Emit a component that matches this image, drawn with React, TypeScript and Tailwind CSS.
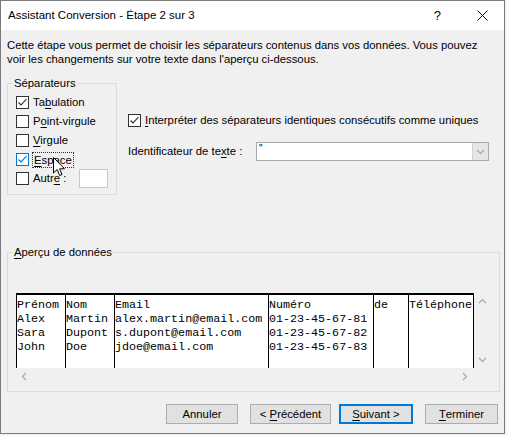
import type { ReactNode } from "react";

const ui = { fontFamily: '"Liberation Sans", Arial, sans-serif' };
const mono = { fontFamily: '"Liberation Mono", "Courier New", monospace' };

function Check({ blue }: { blue?: boolean }) {
  return (
    <svg width="11" height="11" viewBox="0 0 11 11" className="block">
      <path
        d="M1.5 5.5 L4 8 L9.5 2.2"
        fill="none"
        stroke={blue ? "#0078d7" : "#333333"}
        strokeWidth="1.1"
      />
    </svg>
  );
}

function Box({ checked, blue }: { checked?: boolean; blue?: boolean }) {
  return (
    <span
      className={
        "flex h-[13px] w-[13px] shrink-0 items-center justify-center border bg-white " +
        (blue ? "border-[#0078d7]" : "border-[#333333]")
      }
    >
      {checked && <Check blue={blue} />}
    </span>
  );
}

/** Label with one underlined mnemonic letter. */
function Mn({ pre = "", u, post = "" }: { pre?: string; u: string; post?: string }) {
  return (
    <>
      {pre}
      <span className="underline underline-offset-2">{u}</span>
      {post}
    </>
  );
}

function Chevron({ dir }: { dir: "up" | "down" | "left" | "right" }) {
  const d = {
    up: "M1 6 L4.5 2.5 L8 6",
    down: "M1 3 L4.5 6.5 L8 3",
    left: "M6 1 L2.5 4.5 L6 8",
    right: "M3 1 L6.5 4.5 L3 8",
  }[dir];
  return (
    <svg width="9" height="9" viewBox="0 0 9 9" className="block">
      <path d={d} fill="none" stroke="#a8a8a8" strokeWidth="1.2" />
    </svg>
  );
}

function Button({
  w,
  focused,
  children,
}: {
  w: string;
  focused?: boolean;
  children: ReactNode;
}) {
  return (
    <div
      className={
        "flex h-[20px] items-center justify-center bg-[#e1e1e1] text-black " +
        w +
        (focused ? " border-2 border-[#0078d7]" : " border border-[#adadad]")
      }
    >
      {children}
    </div>
  );
}

const columns: { w: string; rows: string[] }[] = [
  { w: "w-[49px]", rows: ["Prénom", "Alex", "Sara", "John"] },
  { w: "w-[49px]", rows: ["Nom", "Martin", "Dupont", "Doe"] },
  {
    w: "w-[154px]",
    rows: ["Email", "alex.martin@email.com", "s.dupont@email.com", "jdoe@email.com"],
  },
  {
    w: "w-[105px]",
    rows: ["Numéro", "01-23-45-67-81", "01-23-45-67-82", "01-23-45-67-83"],
  },
  { w: "w-[35px]", rows: ["de"] },
  { w: "w-[66px] border-r", rows: ["Téléphone"] },
];

export default function App() {
  return (
    <div className="h-[436px] w-[507px] bg-[#f4f4f4]" style={ui}>
      <div className="flex h-[434px] w-[505px] flex-col overflow-hidden border border-[#7a7a7a] bg-[#f0f0f0] text-[11.3px] whitespace-nowrap text-black">
        {/* title bar */}
        <div className="flex h-[29px] shrink-0 items-center bg-white pl-[7px] text-[11.5px]">
          <span>Assistant Conversion - Étape 2 sur 3</span>
          <span className="ml-auto mr-[36px] text-[13px]">?</span>
          <svg width="11" height="11" viewBox="0 0 11 11" className="mr-[16px]">
            <path d="M0.5 0.5 L10.5 10.5 M10.5 0.5 L0.5 10.5" stroke="#111" strokeWidth="1" />
          </svg>
        </div>

        <div className="flex flex-col px-[6px] pt-[8px]">
          <p className="leading-[14px]">
            Cette étape vous permet de choisir les séparateurs contenus dans vos données. Vous pouvez
            <br />
            voir les changements sur votre texte dans l'aperçu ci-dessous.
          </p>

          <div className="mt-[10px] flex">
            <fieldset className="w-[110px] border border-[#dcdcdc] pb-[6px] pl-[5px]">
              <legend className="px-[1px] leading-[14px]">Séparateurs</legend>
              <div className="flex flex-col pl-[3px] pt-[3px]">
                <label className="flex h-[19px] items-center gap-[4px]">
                  <Box checked />
                  <span>
                    <Mn pre="Ta" u="b" post="ulation" />
                  </span>
                </label>
                <label className="flex h-[19px] items-center gap-[4px]">
                  <Box />
                  <span>
                    <Mn pre="P" u="o" post="int-virgule" />
                  </span>
                </label>
                <label className="flex h-[19px] items-center gap-[4px]">
                  <Box />
                  <span>
                    <Mn u="V" post="irgule" />
                  </span>
                </label>
                <label className="relative flex h-[19px] items-center gap-[3px]">
                  <Box checked blue />
                  <span className="border border-dotted border-[#333] px-[1px] leading-[14px]">
                    <Mn u="E" post="space" />
                  </span>
                  <svg
                    width="13"
                    height="21"
                    viewBox="0 0 13 21"
                    className="absolute left-[37px] top-[7px]"
                  >
                    <path
                      d="M0.5 0.5 L0.5 16 L4.2 12.5 L6.7 18.5 L9 17.5 L6.6 11.8 L11.5 11.8 Z"
                      fill="white"
                      stroke="black"
                      strokeWidth="1"
                      strokeLinejoin="round"
                    />
                  </svg>
                </label>
                <label className="flex h-[19px] items-center gap-[4px]">
                  <Box />
                  <span>
                    <Mn pre="Autr" u="e" post=" :" />
                  </span>
                  <span className="ml-[9px] h-[19px] w-[29px] border border-[#c8c8c8] bg-white" />
                </label>
              </div>
            </fieldset>

            <div className="ml-[11px] flex flex-col pt-[36px]">
              <label className="flex h-[16px] items-center gap-[4px]">
                <Box checked />
                <span>
                  <Mn u="I" post="nterpréter des séparateurs identiques consécutifs comme uniques" />
                </span>
              </label>
              <div className="mt-[14px] flex h-[19px] items-center">
                <span className="w-[128px]">
                  <Mn pre="Identificateur de te" u="x" post="te :" />
                </span>
                <div className="flex h-[19px] w-[233px] items-stretch border border-[#a8a8a8] bg-white">
                  <span className="pl-[2px] text-[10px] leading-[12px]">"</span>
                  <span className="ml-auto flex w-[16px] items-center justify-center border-l border-[#cfcfcf] bg-[#e6e6e6]">
                    <Chevron dir="down" />
                  </span>
                </div>
              </div>
            </div>
          </div>

          <fieldset className="mt-[50px] w-[493px] border border-[#dcdcdc] pb-[6px] pl-[5px]">
            <legend className="px-[1px] leading-[14px]">
              <Mn u="A" post="perçu de données" />
            </legend>
            <div className="ml-[2px] mt-[34px] flex h-[92px] w-[476px]">
              <div className="flex w-[459px] flex-col">
                <div className="flex h-[75px] pl-[1px]" style={mono}>
                  {columns.map((c, i) => (
                    <div
                      key={i}
                      className={
                        "flex flex-col overflow-hidden border-l border-t-2 border-black bg-white pt-[3px] text-[11.7px] leading-[14px] whitespace-pre " +
                        c.w
                      }
                    >
                      {c.rows.map((r, j) => (
                        <span key={j}>{r}</span>
                      ))}
                    </div>
                  ))}
                </div>
                <div className="flex h-[17px] items-center justify-between px-[5px]">
                  <Chevron dir="left" />
                  <Chevron dir="right" />
                </div>
              </div>
              <div className="flex h-[75px] w-[17px] flex-col items-center justify-between py-[4px]">
                <Chevron dir="up" />
                <Chevron dir="down" />
              </div>
            </div>
          </fieldset>

          <div className="mt-[12px] flex justify-end gap-[12px]">
            <Button w="w-[72px]">Annuler</Button>
            <Button w="w-[81px]">
              &lt;&nbsp;
              <Mn u="P" post="récédent" />
            </Button>
            <div className="-ml-[4px]">
              <Button w="w-[74px]" focused>
                <Mn u="S" post="uivant" />
                &nbsp;&gt;
              </Button>
            </div>
            <Button w="w-[73px]">
              <Mn u="T" post="erminer" />
            </Button>
          </div>
        </div>
      </div>
    </div>
  );
}
